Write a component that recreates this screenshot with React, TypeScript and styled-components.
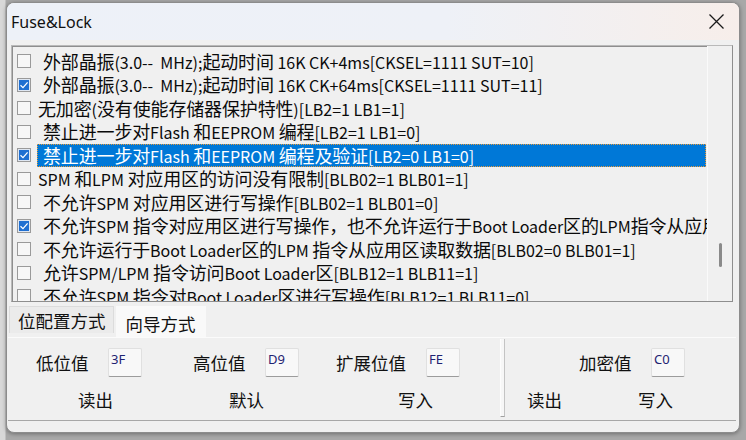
import React from "react";
import styled, { createGlobalStyle } from "styled-components";

const Global = createGlobalStyle`
  html, body { margin: 0; padding: 0; }
  body {
    background: #a8a8a8;
    font-family: "Noto Sans CJK SC", "Noto Sans", sans-serif;
    width: 746px;
    height: 440px;
    overflow: hidden;
  }
`;

const Desktop = styled.div`
  width: 746px;
  height: 440px;
  box-sizing: border-box;
  padding: 2px 6px 7px 6px;
  background: linear-gradient(90deg, #d8d8d8 0px, #d8d8d8 5px, #a8a8a8 6px);
`;

const Window = styled.div`
  width: 734px;
  height: 431px;
  box-sizing: border-box;
  border: 1px solid #8c8c8c;
  border-radius: 8px;
  background: #f0f0f0;
  display: flex;
  flex-direction: column;
  overflow: hidden;
  box-shadow: 0 1px 4px rgba(0, 0, 0, 0.35);
`;

const TitleBar = styled.div`
  height: 37px;
  flex: none;
  display: flex;
  align-items: center;
  justify-content: space-between;
  padding: 0 14px 0 4px;
  background: linear-gradient(90deg, #edf1f8 0%, #eef1f7 60%, #f7eeea 100%);
`;

const Title = styled.div`
  font-family: "Noto Sans", "Open Sans", sans-serif;
  font-size: 16px;
  color: #111;
`;

const CloseIcon = () => (
  <svg width="17" height="17" viewBox="0 0 17 17">
    <path d="M1.5 1.5 L15.5 15.5 M15.5 1.5 L1.5 15.5" stroke="#1a1a1a" strokeWidth="1.3" fill="none" />
  </svg>
);

const Body = styled.div`
  flex: 1;
  display: flex;
  flex-direction: column;
  padding: 5px 6px 0 4px;
`;

const ListBox = styled.div`
  height: 257px;
  box-sizing: border-box;
  border: 1px solid #b9b9b9;
  border-right-color: #8e8e8e;
  border-bottom-color: #8e8e8e;
  box-shadow: inset 1px 1px 0 #8e8e8e;
  background: #f0f0f0;
  display: flex;
  overflow: hidden;
`;

const Rows = styled.div`
  flex: 1;
  min-width: 0;
  padding: 3.5px 1px 0 5px;
  overflow: hidden;
`;

const Row = styled.div`
  height: 23.5px;
  display: flex;
  align-items: center;
`;

const Check = styled.div<{ $on?: boolean }>`
  width: 14px;
  height: 14px;
  box-sizing: border-box;
  flex: none;
  border: 1px solid #9a9a9a;
  background: ${(p) => (p.$on ? "#1f6fd1" : "#f7f7f7")};
  box-shadow: ${(p) => (p.$on ? "inset 0 0 0 1px #dfe7f2" : "none")};
  display: flex;
  align-items: center;
  justify-content: center;
  margin-right: 6px;
`;

const Label = styled.div<{ $sel?: boolean; $indent: number }>`
  flex: 1;
  min-width: 0;
  height: 23.5px;
  line-height: 23.5px;
  box-sizing: border-box;
  white-space: pre;
  font-size: 18px;
  letter-spacing: -0.15px;
  color: ${(p) => (p.$sel ? "#fff" : "#0a0a0a")};
  background: ${(p) => (p.$sel ? "#0078d7" : "transparent")};
  outline: ${(p) => (p.$sel ? "1px dotted #e89a3a" : "none")};
  outline-offset: -1px;
  padding-left: ${(p) => p.$indent}px;
`;

const Latin = styled.span`
  font-size: 16px;
  letter-spacing: 0px;
`;

const ScrollTrack = styled.div`
  width: 24px;
  flex: none;
  border-left: 1px solid #fafafa;
  position: relative;
  background: #f0f0f0;
`;

const Thumb = styled.div`
  position: absolute;
  left: 11px;
  top: 197px;
  width: 3px;
  height: 24px;
  border-radius: 2px;
  background: #8a8a8a;
`;

const Tabs = styled.div`
  display: flex;
  align-items: flex-end;
  height: 35px;
  margin-left: -2px;
`;

const Tab = styled.div<{ $active?: boolean }>`
  height: ${(p) => (p.$active ? "31px" : "27px")};
  box-sizing: border-box;
  padding: ${(p) => (p.$active ? "2px 9px 0 9px" : "0 7px 0 8px")};
  margin-bottom: ${(p) => (p.$active ? "0" : "4px")};
  font-size: 17.5px;
  color: #111;
  display: flex;
  align-items: center;
  background: ${(p) => (p.$active ? "#f9f9f9" : "#ebebeb")};
  border: 1px solid ${(p) => (p.$active ? "#f9f9f9" : "#dcdcdc")};
  border-bottom: none;
  margin-right: 2px;
`;

const Panel = styled.div`
  margin-left: -3px;
  margin-right: -3px;
  height: 84px;
  box-sizing: border-box;
  border-top: 1px solid #fbfbfb;
  border-bottom: 1px solid #a7a7a7;
  display: flex;
  background: #f0f0f0;
`;

const Group = styled.div<{ $w: number }>`
  width: ${(p) => p.$w}px;
  flex: none;
  display: flex;
  flex-direction: column;
  padding-top: 10px;
  box-sizing: border-box;
`;

const Line = styled.div`
  display: flex;
  align-items: center;
  height: 29px;
`;

const ButtonLine = styled.div`
  display: flex;
  align-items: center;
  height: 24px;
  margin-top: 10px;
`;

const Caption = styled.span<{ $ml: number; $w: number }>`
  margin-left: ${(p) => p.$ml}px;
  width: ${(p) => p.$w}px;
  font-size: 17.5px;
  color: #111;
  white-space: nowrap;
`;

const ValueBox = styled.div<{ $ml: number }>`
  margin-left: ${(p) => p.$ml}px;
  width: 34px;
  height: 29px;
  box-sizing: border-box;
  border: 1px solid #e0e0e0;
  border-bottom: 1px solid #9c9c9c;
  border-radius: 2px;
  background: #f8f8f8;
  font-family: "Noto Sans", "Liberation Sans", sans-serif;
  font-size: 13px;
  color: #1f2372;
  padding: 3px 0 0 2px;
  line-height: 15px;
`;

const FlatButton = styled.button<{ $ml: number }>`
  margin-left: ${(p) => p.$ml}px;
  border: none;
  background: transparent;
  padding: 0;
  font-family: "Noto Sans CJK SC", sans-serif;
  font-size: 17.5px;
  color: #111;
`;

const Separator = styled.div`
  width: 10px;
  flex: none;
  margin: 1px 0 3px 0;
  display: flex;
  justify-content: center;
  &::before {
    content: "";
    width: 3px;
    background: #f7f7f7;
    border-left: 1px solid #fdfdfd;
    border-right: 1px solid #c4c4c4;
    border-bottom: 1px solid #a0a0a0;
  }
`;

const items: { t: string; on?: boolean; sel?: boolean; ind: number }[] = [
  { t: "外部晶振(3.0--  MHz);起动时间 16K CK+4ms[CKSEL=1111 SUT=10]", ind: 6 },
  { t: "外部晶振(3.0--  MHz);起动时间 16K CK+64ms[CKSEL=1111 SUT=11]", on: true, ind: 6 },
  { t: "无加密(没有使能存储器保护特性)[LB2=1 LB1=1]", ind: 1 },
  { t: "禁止进一步对Flash 和EEPROM 编程[LB2=1 LB1=0]", ind: 6 },
  { t: "禁止进一步对Flash 和EEPROM 编程及验证[LB2=0 LB1=0]", on: true, sel: true, ind: 6 },
  { t: "SPM 和LPM 对应用区的访问没有限制[BLB02=1 BLB01=1]", ind: 1 },
  { t: "不允许SPM 对应用区进行写操作[BLB02=1 BLB01=0]", ind: 6 },
  { t: "不允许SPM 指令对应用区进行写操作，也不允许运行于Boot Loader区的LPM指令从应用", on: true, ind: 6 },
  { t: "不允许运行于Boot Loader区的LPM 指令从应用区读取数据[BLB02=0 BLB01=1]", ind: 6 },
  { t: "允许SPM/LPM 指令访问Boot Loader区[BLB12=1 BLB11=1]", ind: 6 },
  { t: "不允许SPM 指令对Boot Loader区进行写操作[BLB12=1 BLB11=0]", ind: 6 },
];

const CJK = /([\u3000-\u9fff\uff00-\uffef]+)/;

const renderMixed = (t: string) =>
  t.split(CJK).filter(Boolean).map((part, i) =>
    CJK.test(part) ? <React.Fragment key={i}>{part}</React.Fragment> : <Latin key={i}>{part}</Latin>
  );

const Tick = () => (
  <svg width="10" height="10" viewBox="0 0 10 10">
    <path d="M1.5 5.2 L4 7.6 L8.6 2.4" stroke="#fff" strokeWidth="1.3" fill="none" />
  </svg>
);

export default function App() {
  return (
    <>
      <Global />
      <Desktop>
        <Window>
          <TitleBar>
            <Title>Fuse&amp;Lock</Title>
            <CloseIcon />
          </TitleBar>
          <Body>
            <ListBox>
              <Rows>
                {items.map((it, i) => (
                  <Row key={i}>
                    <Check $on={it.on}>{it.on && <Tick />}</Check>
                    <Label $sel={it.sel} $indent={it.ind}>
                      {renderMixed(it.t)}
                    </Label>
                  </Row>
                ))}
              </Rows>
              <ScrollTrack>
                <Thumb />
              </ScrollTrack>
            </ListBox>
            <Tabs>
              <Tab>位配置方式</Tab>
              <Tab $active>向导方式</Tab>
            </Tabs>
            <Panel>
              <Group $w={489}>
                <Line>
                  <Caption $ml={28} $w={53}>低位值</Caption>
                  <ValueBox $ml={19}>3F</ValueBox>
                  <Caption $ml={51} $w={53}>高位值</Caption>
                  <ValueBox $ml={19}>D9</ValueBox>
                  <Caption $ml={37} $w={72}>扩展位值</Caption>
                  <ValueBox $ml={18}>FE</ValueBox>
                </Line>
                <ButtonLine>
                  <FlatButton $ml={70}>读出</FlatButton>
                  <FlatButton $ml={116}>默认</FlatButton>
                  <FlatButton $ml={134}>写入</FlatButton>
                </ButtonLine>
              </Group>
              <Separator />
              <Group $w={230}>
                <Line>
                  <Caption $ml={72} $w={53}>加密值</Caption>
                  <ValueBox $ml={19}>C0</ValueBox>
                </Line>
                <ButtonLine>
                  <FlatButton $ml={20}>读出</FlatButton>
                  <FlatButton $ml={76}>写入</FlatButton>
                </ButtonLine>
              </Group>
            </Panel>
          </Body>
        </Window>
      </Desktop>
    </>
  );
}
